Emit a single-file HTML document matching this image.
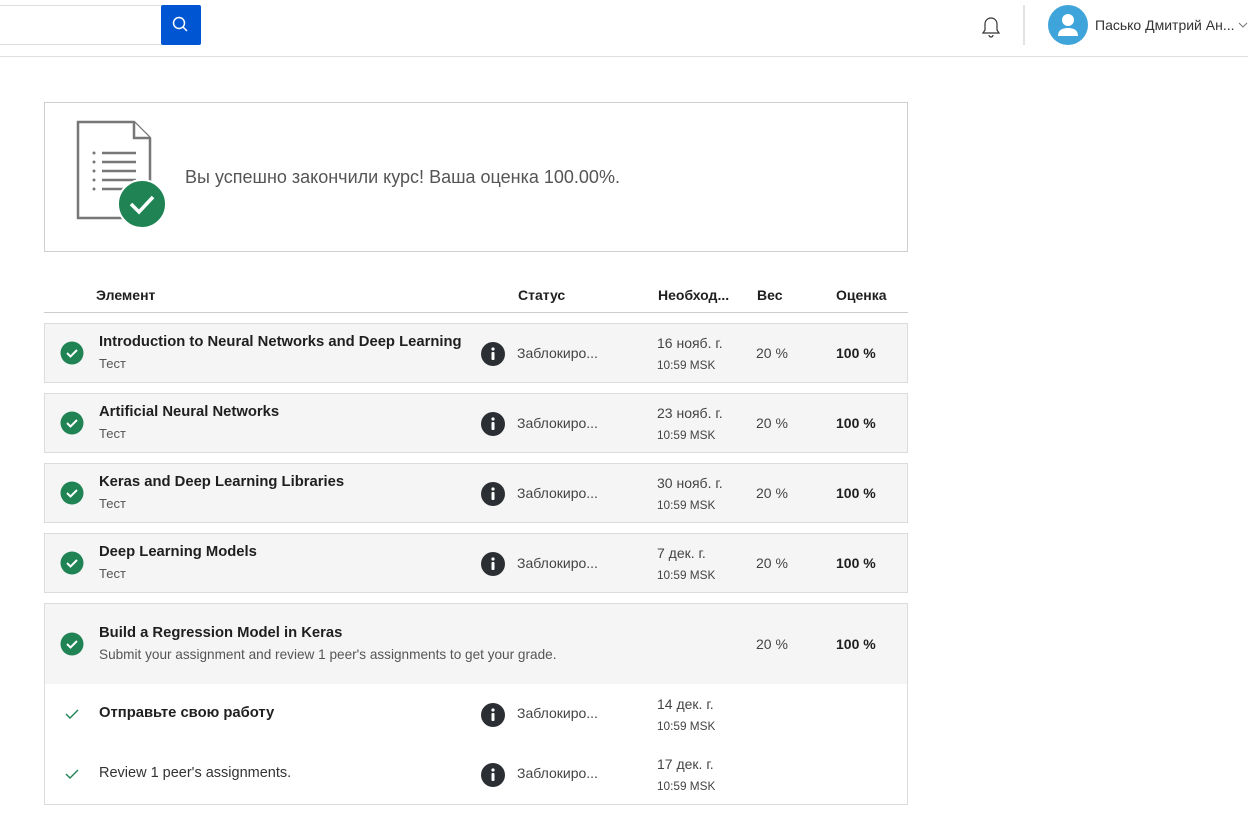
<!DOCTYPE html>
<html><head><meta charset="utf-8"><style>
*{margin:0;padding:0;box-sizing:border-box}
body{width:1248px;height:830px;background:#fff;font-family:"Liberation Sans","DejaVu Sans",sans-serif;color:#1f1f1f;position:relative;overflow:hidden}
.a{position:absolute;white-space:nowrap}
.box{position:absolute;left:44px;width:864px;background:#f5f5f5;border:1px solid #dcdcdc}
.t{font-weight:bold;font-size:14.8px;color:#1f1f1f}
.s{font-size:13px;color:#555}
.n{font-size:14px;color:#444}
.sm{font-size:11.8px;color:#444}
.b{font-weight:bold;font-size:14px;color:#1f1f1f}
</style></head><body>
<div class="a" style="left:0;top:5px;width:162px;height:40px;border:1px solid #ddd;border-left:none"></div>
<div class="a" style="left:161px;top:5px;width:40px;height:40px;background:#0056d2;border-radius:2px">
<svg width="40" height="40"><circle cx="18" cy="18" r="5.5" fill="none" stroke="#fff" stroke-width="1.5"/><line x1="22" y1="22" x2="26" y2="26" stroke="#fff" stroke-width="1.5"/></svg></div>
<div class="a" style="left:0;top:56px;width:1248px;height:1px;background:#e0e0e0"></div>
<svg class="a" style="left:978px;top:13px" width="26" height="28"><path d="M5 20 L7 17 V11 A6 6 0 0 1 19 11 V17 L21 20 Z" fill="none" stroke="#333" stroke-width="1.2"/><path d="M11 22 A2 2 0 0 0 15 22" fill="none" stroke="#333" stroke-width="1.2"/></svg>
<div class="a" style="left:1023px;top:5px;width:2px;height:40px;background:#e3e3e3"></div>
<svg class="a" style="left:1048px;top:5px" width="40" height="40"><circle cx="20" cy="20" r="20" fill="#3fa4d9"/><circle cx="20" cy="15" r="6" fill="#fff"/><path d="M10 31 Q10 23 20 23 Q30 23 30 31 Z" fill="#fff"/></svg>
<div class="a" style="left:1095px;top:17px;font-size:14px;color:#333">Пасько Дмитрий Ан...</div>
<svg class="a" style="left:1238px;top:20px" width="10" height="10"><path d="M1 3 L5 7 L9 3" fill="none" stroke="#777"/></svg>
<div class="a" style="left:44px;top:102px;width:864px;height:150px;border:1px solid #cfcfcf"></div>
<svg class="a" style="left:76px;top:120px" width="95" height="112">
<path d="M2 2 H58 L74 18 V98 H2 Z" fill="#fff" stroke="#777" stroke-width="2.5"/>
<path d="M58 2 V18 H74" fill="#fff" stroke="#777" stroke-width="2.5"/>
<g fill="#777"><circle cx="18" cy="33" r="1.5"/><circle cx="18" cy="42" r="1.5"/><circle cx="18" cy="51" r="1.5"/><circle cx="18" cy="60" r="1.5"/><circle cx="18" cy="69" r="1.5"/></g>
<g stroke="#777" stroke-width="2.5"><line x1="26" y1="33" x2="60" y2="33"/><line x1="26" y1="42" x2="60" y2="42"/><line x1="26" y1="51" x2="60" y2="51"/><line x1="26" y1="60" x2="60" y2="60"/><line x1="26" y1="69" x2="50" y2="69"/></g>
<circle cx="66" cy="84" r="24" fill="#1f8354" stroke="#fff" stroke-width="2"/>
<path d="M55 84 L63 92 L77 77" fill="none" stroke="#fff" stroke-width="3.5"/>
</svg>
<div class="a" style="left:185px;top:167px;font-size:18px;color:#555">Вы успешно закончили курс! Ваша оценка 100.00%.</div>
<div class="a b" style="left:96px;top:287px">Элемент</div>
<div class="a b" style="left:518px;top:287px">Статус</div>
<div class="a b" style="left:658px;top:287px">Необход...</div>
<div class="a b" style="left:757px;top:287px">Вес</div>
<div class="a b" style="left:836px;top:287px">Оценка</div>
<div class="a" style="left:44px;top:312px;width:864px;height:1px;background:#ccc"></div>
<div class="box" style="top:323px;height:60px"></div>
<div class="box" style="top:393px;height:60px"></div>
<div class="box" style="top:463px;height:60px"></div>
<div class="box" style="top:533px;height:60px"></div>
<div class="box" style="top:603px;height:202px;background:#fff"></div>
<div class="a" style="left:45px;top:604px;width:862px;height:80px;background:#f5f5f5"></div>
<svg width="0" height="0" style="position:absolute"><defs>
<g id="ok"><circle cx="12" cy="12" r="11.5" fill="#1f8354"/><path d="M7 12 L10.5 15.5 L17 9" fill="none" stroke="#fff" stroke-width="2"/></g>
<g id="inf"><circle cx="12" cy="12" r="12" fill="#2b2e33"/><circle cx="12" cy="7" r="1.6" fill="#fff"/><rect x="10.5" y="10" width="3" height="8" rx="1" fill="#fff"/></g>
</defs></svg>
<svg class="a" style="left:60px;top:341px" width="24" height="24"><use href="#ok"/></svg>
<div class="a t" style="left:99px;top:334px">Introduction to Neural Networks and Deep Learning</div>
<div class="a s" style="left:99px;top:356px">Тест</div>
<svg class="a" style="left:481px;top:342px" width="24" height="24"><use href="#inf"/></svg>
<div class="a n" style="left:517px;top:345px">Заблокиро...</div>
<div class="a n" style="left:657px;top:335px">16 нояб. г.</div>
<div class="a sm" style="left:657px;top:358px">10:59 MSK</div>
<div class="a n" style="left:756px;top:345px">20 %</div>
<div class="a b" style="left:836px;top:345px">100 %</div>
<svg class="a" style="left:60px;top:411px" width="24" height="24"><use href="#ok"/></svg>
<div class="a t" style="left:99px;top:404px">Artificial Neural Networks</div>
<div class="a s" style="left:99px;top:426px">Тест</div>
<svg class="a" style="left:481px;top:412px" width="24" height="24"><use href="#inf"/></svg>
<div class="a n" style="left:517px;top:415px">Заблокиро...</div>
<div class="a n" style="left:657px;top:405px">23 нояб. г.</div>
<div class="a sm" style="left:657px;top:428px">10:59 MSK</div>
<div class="a n" style="left:756px;top:415px">20 %</div>
<div class="a b" style="left:836px;top:415px">100 %</div>
<svg class="a" style="left:60px;top:481px" width="24" height="24"><use href="#ok"/></svg>
<div class="a t" style="left:99px;top:474px">Keras and Deep Learning Libraries</div>
<div class="a s" style="left:99px;top:496px">Тест</div>
<svg class="a" style="left:481px;top:482px" width="24" height="24"><use href="#inf"/></svg>
<div class="a n" style="left:517px;top:485px">Заблокиро...</div>
<div class="a n" style="left:657px;top:475px">30 нояб. г.</div>
<div class="a sm" style="left:657px;top:498px">10:59 MSK</div>
<div class="a n" style="left:756px;top:485px">20 %</div>
<div class="a b" style="left:836px;top:485px">100 %</div>
<svg class="a" style="left:60px;top:551px" width="24" height="24"><use href="#ok"/></svg>
<div class="a t" style="left:99px;top:544px">Deep Learning Models</div>
<div class="a s" style="left:99px;top:566px">Тест</div>
<svg class="a" style="left:481px;top:552px" width="24" height="24"><use href="#inf"/></svg>
<div class="a n" style="left:517px;top:555px">Заблокиро...</div>
<div class="a n" style="left:657px;top:545px">7 дек. г.</div>
<div class="a sm" style="left:657px;top:568px">10:59 MSK</div>
<div class="a n" style="left:756px;top:555px">20 %</div>
<div class="a b" style="left:836px;top:555px">100 %</div>
<svg class="a" style="left:60px;top:632px" width="24" height="24"><use href="#ok"/></svg>
<div class="a t" style="left:99px;top:625px">Build a Regression Model in Keras</div>
<div class="a s" style="left:99px;top:647px;font-size:13.6px">Submit your assignment and review 1 peer's assignments to get your grade.</div>
<div class="a n" style="left:756px;top:636px">20 %</div>
<div class="a b" style="left:836px;top:636px">100 %</div>
<svg class="a" style="left:64px;top:707px" width="16" height="14"><path d="M2 7 L6 11 L14 3" fill="none" stroke="#1f8354" stroke-width="1.4"/></svg>
<div class="a t" style="left:99px;top:705px">Отправьте свою работу</div>
<svg class="a" style="left:481px;top:703px" width="24" height="24"><use href="#inf"/></svg>
<div class="a n" style="left:517px;top:705px">Заблокиро...</div>
<div class="a n" style="left:657px;top:696px">14 дек. г.</div>
<div class="a sm" style="left:657px;top:719px">10:59 MSK</div>
<svg class="a" style="left:64px;top:767px" width="16" height="14"><path d="M2 7 L6 11 L14 3" fill="none" stroke="#1f8354" stroke-width="1.4"/></svg>
<div class="a" style="left:99px;top:765px;font-size:14.5px;color:#333">Review 1 peer's assignments.</div>
<svg class="a" style="left:481px;top:763px" width="24" height="24"><use href="#inf"/></svg>
<div class="a n" style="left:517px;top:765px">Заблокиро...</div>
<div class="a n" style="left:657px;top:756px">17 дек. г.</div>
<div class="a sm" style="left:657px;top:779px">10:59 MSK</div>
</body></html>
